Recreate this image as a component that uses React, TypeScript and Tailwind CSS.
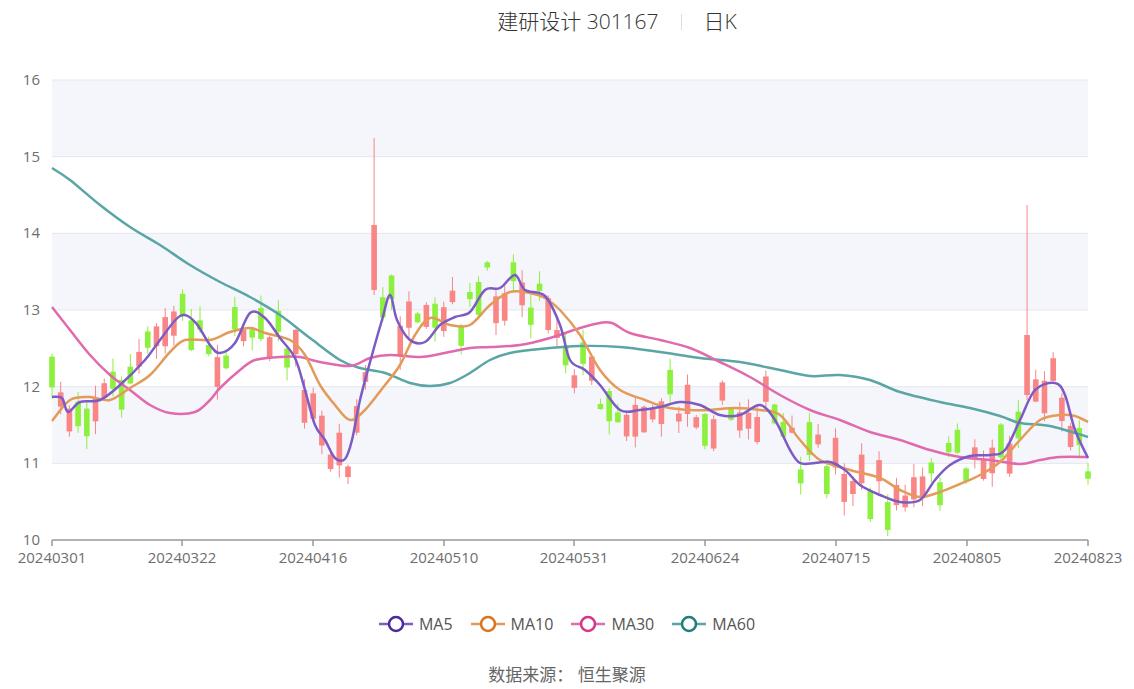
import React from "react";

type P = [number, number];
const MA5: P[] = [[52,397],[62,398],[68,412],[80,402],[100,400],[120,385],[145,360],[160,340],[180,316],[195,322],[210,345],[220,353],[235,343],[250,313],[265,318],[280,338],[295,358],[305,390],[315,425],[325,440],[335,458],[345,459],[352,440],[360,400],[372,355],[382,320],[390,295],[397,320],[410,340],[425,342],[440,325],[455,317],[470,312],[485,290],[500,288],[515,275],[525,290],[545,296],[560,325],[570,360],[585,370],[600,385],[620,410],[640,410],[660,407],[680,402],[700,405],[720,415],[740,415],[760,405],[775,420],[790,450],[800,463],[815,463],[830,462],[845,470],[860,485],[880,495],[900,502],[920,500],[935,480],[950,465],[970,456],[990,455],[1005,450],[1020,420],[1035,390],[1055,383],[1065,395],[1075,430],[1088,458]];
const MA10: P[] = [[52,421],[70,400],[90,397],[110,400],[130,388],[150,375],[170,352],[185,340],[210,340],[230,332],[250,328],[265,333],[290,340],[305,355],[320,385],[335,405],[350,420],[365,410],[385,385],[400,365],[415,335],[430,318],[450,325],[470,325],[490,305],[510,292],[530,293],[545,298],[560,310],[580,335],[600,370],[620,390],[645,400],[665,407],[690,410],[710,410],[735,408],[760,410],[780,415],[800,440],[820,460],[850,470],[880,478],[900,490],[920,497],[940,492],[960,484],[980,475],[1000,462],[1020,440],[1040,420],[1060,415],[1075,416],[1088,422]];
const MA30: P[] = [[52,307],[70,330],[90,355],[110,375],[130,390],[150,405],[170,413],[195,412],[210,400],[220,388],[240,370],[255,360],[280,357],[300,357],[320,362],[350,366],[370,358],[390,355],[420,357],[440,354],[470,348],[490,347],[520,345],[550,338],[580,328],[600,323],[612,323],[630,333],[660,340],[690,348],[720,362],[750,377],[780,395],[810,410],[840,420],[870,432],[900,440],[930,450],[960,457],[990,460],[1020,464],[1040,460],[1060,457],[1088,457]];
const MA60: P[] = [[52,168],[70,180],[100,205],[130,227],[160,245],[190,265],[220,282],[250,297],[280,315],[310,338],[340,360],[360,368],[385,373],[410,383],[430,386],[450,383],[470,373],[490,360],[510,353],[540,349],[580,346],[620,347],[660,352],[700,358],[740,362],[780,370],[810,376],[840,375],[870,380],[900,392],[940,402],[970,408],[1000,416],[1020,423],[1050,426],[1088,437]];

function smooth(pts: P[]) {
  let d = `M${pts[0][0]},${pts[0][1]}`;
  for (let i = 0; i < pts.length - 1; i++) {
    const p0 = pts[i - 1] || pts[i], p1 = pts[i], p2 = pts[i + 1], p3 = pts[i + 2] || p2;
    const c1x = p1[0] + (p2[0] - p0[0]) / 6, c1y = p1[1] + (p2[1] - p0[1]) / 6;
    const c2x = p2[0] - (p3[0] - p1[0]) / 6, c2y = p2[1] - (p3[1] - p1[1]) / 6;
    d += ` C${c1x},${c1y} ${c2x},${c2y} ${p2[0]},${p2[1]}`;
  }
  return d;
}
function interp(pts: P[], x: number) {
  for (let i = 0; i < pts.length - 1; i++) {
    if (x >= pts[i][0] && x <= pts[i + 1][0]) {
      const t = (x - pts[i][0]) / (pts[i + 1][0] - pts[i][0]);
      return pts[i][1] + t * (pts[i + 1][1] - pts[i][1]);
    }
  }
  return pts[pts.length - 1][1];
}
let seed = 7;
const rnd = () => { seed = (seed * 16807) % 2147483647; return seed / 2147483647; };

const N = 120;
const step = (1088 - 52) / (N - 1);
const candles = Array.from({ length: N }, (_, i) => {
  const x = 52 + i * step;
  const c = interp(MA5, x) + (rnd() - 0.5) * 50;
  const len = 5 + rnd() * 28;
  let up = rnd() > 0.5;
  let top = c - len / 2, bot = c + len / 2;
  let hi = top - rnd() * 14, lo = bot + rnd() * 14;
  if (Math.abs(x - 1027) < 5) { up = true; top = 335; bot = 395; hi = 205; lo = 400; }
  if (Math.abs(x - 374) < 5) { up = true; top = 225; bot = 290; hi = 138; lo = 295; }
  return { x, top, bot, hi, lo, up };
});

const bands = [80, 233.3, 386.7];
const yLabels = [16, 15, 14, 13, 12, 11, 10];
const xLabels = ["20240301","20240322","20240416","20240510","20240531","20240624","20240715","20240805","20240823"];
const xPos = [52, 182, 313, 444, 574, 705, 836, 967, 1088];

const legend = [
  { n: "MA5", c: "#4b2a9b", l: "#7c5cc4" },
  { n: "MA10", c: "#d9731f", l: "#e49a58" },
  { n: "MA30", c: "#d6338a", l: "#e06aad" },
  { n: "MA60", c: "#1f7d7d", l: "#5aa5a5" },
];

export default function App() {
  return (
    <div className="w-[1134px] h-[689px] bg-white relative overflow-hidden" style={{ fontFamily: '"Open Sans","Noto Sans CJK SC",sans-serif' }}>
      <div className="h-[44px] flex items-center justify-center pl-[100px] text-[21px] text-[#333] font-light">
        <span>建研设计 301167</span>
        <span className="mx-[22px] w-px h-[16px] bg-[#ddd]" />
        <span>日K</span>
      </div>
      <svg width="1134" height="556" viewBox="0 44 1134 556" className="block">
        {bands.map((y) => <rect key={y} x={52} y={y} width={1036} height={76.67} fill="#f5f6fb" />)}
        {yLabels.map((v, i) => {
          const y = 80 + i * 76.67;
          return (
            <g key={v}>
              {i < 6 && <line x1={52} x2={1088} y1={y} y2={y} stroke="#e3e7f0" strokeWidth={1} />}
              <text x={40} y={y + 5} textAnchor="end" fontSize={15} fill="#6e6e6e">{v}</text>
            </g>
          );
        })}
        {candles.map((k, i) => {
          const col = k.up ? "#f98585" : "#8cf03d";
          return (
            <g key={i}>
              <line x1={k.x} x2={k.x} y1={k.hi} y2={k.lo} stroke={col} strokeWidth={1} />
              <rect x={k.x - 2.8} y={k.top} width={5.6} height={k.bot - k.top} fill={col} />
            </g>
          );
        })}
        <path d={smooth(MA60)} fill="none" stroke="#5aa5a5" strokeWidth={2.5} />
        <path d={smooth(MA30)} fill="none" stroke="#e06aad" strokeWidth={2.5} />
        <path d={smooth(MA10)} fill="none" stroke="#e49a58" strokeWidth={2.5} />
        <path d={smooth(MA5)} fill="none" stroke="#7c5cc4" strokeWidth={2.5} />
        <line x1={52} x2={1088} y1={540} y2={540} stroke="#999" strokeWidth={1.5} />
        {xPos.map((x, i) => (
          <g key={x}>
            <line x1={x} x2={x} y1={540} y2={546} stroke="#999" strokeWidth={1.5} />
            <text x={x} y={563} textAnchor="middle" fontSize={15} fill="#6e6e6e">{xLabels[i]}</text>
          </g>
        ))}
      </svg>
      <div className="h-[48px] flex items-center justify-center gap-[18px] text-[16px] text-[#555]">
        {legend.map((m) => (
          <div key={m.n} className="flex items-center gap-[6px]">
            <svg width="34" height="18">
              <line x1="0" x2="34" y1="9" y2="9" stroke={m.l} strokeWidth="2.5" />
              <circle cx="17" cy="9" r="7" fill="#fff" stroke={m.c} strokeWidth="2.5" />
            </svg>
            <span>{m.n}</span>
          </div>
        ))}
      </div>
      <div className="mt-[14px] text-center text-[17px] text-[#666]">数据来源：&nbsp;恒生聚源</div>
    </div>
  );
}
